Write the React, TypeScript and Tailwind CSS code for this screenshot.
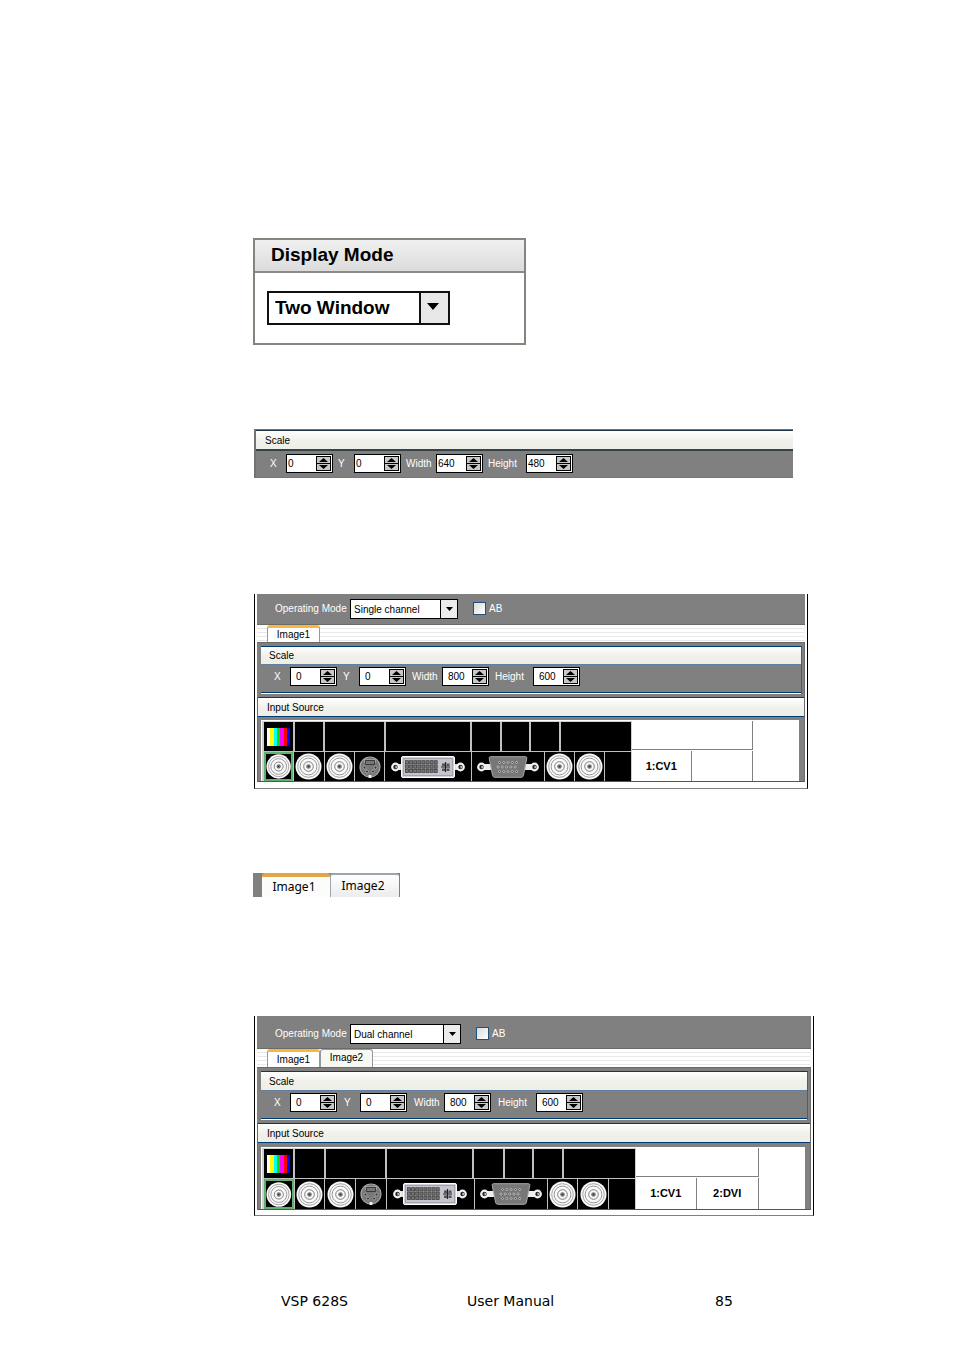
import { useId, useState } from "react";
import clsx from "clsx";

function Spinner({
  label,
  labelClass,
  initial,
  flush,
}: {
  label: string;
  labelClass: string;
  initial: number;
  flush?: boolean;
}) {
  const id = useId();
  const [value, setValue] = useState(initial);

  return (
    <div className="flex items-center">
      <label htmlFor={id} className={clsx("shrink-0 text-white", labelClass)}>
        {label}
      </label>
      <div className="flex h-[19px] w-[47px] items-center border border-black bg-white pr-px">
        <input
          id={id}
          value={value}
          onChange={(e) => setValue(Number(e.target.value) || 0)}
          className={clsx("w-0 min-w-0 flex-1 bg-transparent text-black outline-none", flush ? "pl-px" : "pl-[5px]")}
        />
        <div className="flex h-[15px] w-[15px] shrink-0 flex-col border border-black bg-[#c8c8c8]">
          <button
            onClick={() => setValue(value + 1)}
            aria-label={`Increase ${label}`}
            className="flex flex-1 items-center justify-center border-b border-black"
          >
            <svg width="9" height="4" viewBox="0 0 9 4">
              <path d="M4.5 0 9 4H0z" fill="#000" />
            </svg>
          </button>
          <button
            onClick={() => setValue(Math.max(0, value - 1))}
            aria-label={`Decrease ${label}`}
            className="flex flex-1 items-center justify-center"
          >
            <svg width="9" height="4" viewBox="0 0 9 4">
              <path d="M0 0H9L4.5 4z" fill="#000" />
            </svg>
          </button>
        </div>
      </div>
    </div>
  );
}

function ScaleFields({
  width,
  height,
  flush,
  className,
}: {
  width: number;
  height: number;
  flush?: boolean;
  className?: string;
}) {
  return (
    <div className={clsx("flex items-center", className)}>
      <Spinner label="X" labelClass="w-4" initial={0} flush={flush} />
      <Spinner label="Y" labelClass="w-4" initial={0} flush={flush} />
      <Spinner label="Width" labelClass="w-[30px]" initial={width} flush={flush} />
      <Spinner label="Height" labelClass="w-[38px]" initial={height} flush={flush} />
    </div>
  );
}

function BncIcon() {
  return (
    <svg width="27" height="27" viewBox="0 0 27 27" fill="none">
      <circle cx="13.5" cy="13.5" r="13" fill="#fafafa" />
      <circle cx="13.5" cy="13.5" r="10.8" stroke="#999" strokeWidth="0.9" />
      <circle cx="13.5" cy="13.5" r="8.4" stroke="#8a8a8a" strokeWidth="0.9" />
      <circle cx="13.5" cy="13.5" r="4.8" stroke="#7a7a7a" />
      <circle cx="13.5" cy="13.5" r="2.3" fill="#777" />
      <circle cx="13.5" cy="13.5" r="0.8" fill="#333" />
    </svg>
  );
}

function SVideoIcon() {
  return (
    <svg width="22" height="22" viewBox="0 0 22 22" fill="none">
      <circle cx="11" cy="11" r="10" fill="#777" stroke="#a8a8a8" strokeWidth="1.2" />
      <path d="M6.5 8.500V4.500h9V8.500z" fill="#777" stroke="#3a3a3a" />
      <path d="M5.500 7V3.500h11V7" stroke="#aaa" strokeWidth="0.8" />
      <g fill="#333" stroke="#b5b5b5" strokeWidth="0.8">
        <circle cx="5.5" cy="11.5" r="1.5" />
        <circle cx="16.500" cy="11.5" r="1.5" />
        <circle cx="8" cy="15.5" r="1.5" />
        <circle cx="14" cy="15.5" r="1.5" />
      </g>
      <path d="M9.5 19h3v3h-3z" fill="#eee" />
    </svg>
  );
}

function Screw({ x }: { x: number }) {
  return (
    <>
      <circle cx={x} cy="11" r="4.4" fill="#f2f2f2" />
      <circle cx={x} cy="11" r="2.2" fill="#222" />
      <path d={`M${x} 9.5a1.5 1.5 0 0 1 0 3z`} fill="#ddd" />
    </>
  );
}

function DviIcon() {
  const cols = [0, 1, 2, 3, 4, 5, 6, 7];
  return (
    <svg width="74" height="22" viewBox="0 0 74 22">
      <path d="M4 8h6v6H4zM64 8h6v6h-6z" fill="#dcdcdc" />
      <Screw x={4.5} />
      <Screw x={69.5} />
      <rect x="10.5" y="0.5" width="53" height="21" rx="1.5" fill="#d2d2da" stroke="#fff" />
      <rect x="12.5" y="2.5" width="49" height="17" fill="#c4c4cc" stroke="#a2a2aa" />
      {[0, 1, 2].map((row) =>
        cols.map((col) => (
          <rect
            key={`${row}-${col}`}
            x={14.5 + col * 4.1}
            y={4.7 + row * 4.3}
            width="3"
            height="3.2"
            fill="#777"
            stroke="#3f3f3f"
            strokeWidth="0.8"
          />
        ))
      )}
      <path d="M50 11h9M54.5 6v10" stroke="#222" strokeWidth="1.2" />
      <path d="M51 7.500h3v2.500h-3zM55.500 7.500h3v2.500h-3zM51 12.500h3v2.500h-3zM55.500 12.500h3v2.500h-3z" fill="#555" />
    </svg>
  );
}

function VgaIcon() {
  return (
    <svg width="62" height="22" viewBox="0 0 62 22">
      <path d="M4 8h10v6H4zM48 8h10v6H48z" fill="#ededed" />
      <Screw x={4.5} />
      <Screw x={57.5} />
      <path
        d="M13.5.7h35q1.6 0 1.3 1.6l-3.4 17.2q-.4 1.8-2.2 1.8H17.8q-1.8 0-2.2-1.8L12.2 2.3Q11.9.7 13.5.7z"
        fill="#777"
        stroke="#a9a9a9"
      />
      {[0, 1, 2].map((row) =>
        [0, 1, 2, 3, 4].map((col) => (
          <circle
            key={`${row}-${col}`}
            cx={(row === 1 ? 21 : 22.5) + col * 4.3}
            cy={6.5 + row * 4.5}
            r="1"
            fill="#444"
            stroke="#d8d8d8"
            strokeWidth="0.7"
          />
        ))
      )}
    </svg>
  );
}

function ColorBars() {
  const bars = ["#ffffff", "#ffff00", "#00ffff", "#00e000", "#ff00ff", "#ff0000", "#0000ff"];
  return (
    <svg width="23" height="18" viewBox="0 0 23 18" shapeRendering="crispEdges">
      {bars.map((color, i) => (
        <rect key={color} x={i * 3.3} width="3.4" height="18" fill={color} />
      ))}
    </svg>
  );
}

function DropArrow({ big }: { big?: boolean }) {
  return (
    <svg width={big ? 12 : 7} height={big ? 7 : 4} viewBox="0 0 8 4" preserveAspectRatio="none">
      <path d="M0 0H8L4 4z" fill="#000" />
    </svg>
  );
}

function TitleBar({ children, className }: { children: string; className?: string }) {
  return (
    <div className={clsx("flex items-center bg-linear-to-b from-white via-[#f1f1ec] to-[#eeeee6]", className)}>
      {children}
    </div>
  );
}

function SourceCell({
  name,
  selected,
  onSelect,
  children,
}: {
  name: string;
  selected?: boolean;
  onSelect: () => void;
  children?: React.ReactNode;
}) {
  return (
    <button
      onClick={onSelect}
      aria-label={name}
      className={clsx(
        "flex min-w-0 items-center justify-center overflow-hidden bg-black",
        selected && "border-2 border-[#5cb36e]"
      )}
    >
      {children}
    </button>
  );
}

function SourceGrid({ second, dual }: { second?: string; dual?: boolean }) {
  const [source, setSource] = useState("CV1");
  const row2 = [
    { name: "CV1", icon: <BncIcon /> },
    { name: "CV2", icon: <BncIcon /> },
    { name: "CV3", icon: <BncIcon /> },
    { name: "S-Video", icon: <SVideoIcon /> },
    { name: "DVI", icon: <DviIcon /> },
    { name: "VGA", icon: <VgaIcon /> },
    { name: "SDI 1", icon: <BncIcon /> },
    { name: "SDI 2", icon: <BncIcon /> },
    { name: "None" },
  ];

  return (
    <div className="grid grid-cols-[371fr_122fr_46fr] border-t border-l border-white bg-white">
      <div className="border-t border-r border-l-2 border-[#d0d0d0] bg-[#c0c0c0]">
        <div className="grid h-[30px] grid-cols-[30fr_30fr_61fr_88fr_30fr_28fr_29fr_73fr] gap-x-0.5 pb-px">
          <div className="flex items-center justify-center bg-black">
            <ColorBars />
          </div>
          {[1, 2, 3, 4, 5, 6, 7].map((i) => (
            <div key={i} className="bg-black" />
          ))}
        </div>
        <div
          className={clsx(
            "grid grid-cols-[30fr_30fr_30fr_30fr_88fr_73fr_30fr_30fr_26fr] gap-x-px",
            dual ? "h-[30px]" : "h-[29px]"
          )}
        >
          {row2.map((s) => (
            <SourceCell key={s.name} name={s.name} selected={source === s.name} onSelect={() => setSource(s.name)}>
              {s.icon}
            </SourceCell>
          ))}
        </div>
      </div>
      <div className="flex flex-col text-[11px] font-bold">
        <div className="h-[29px] border-r border-b border-[#808080]" />
        <div className="mt-px grid flex-1 grid-cols-2 border-r border-[#808080]">
          <div className="flex items-center justify-center border-r border-[#808080]">1:CV1</div>
          <div className="flex items-center justify-center">{second}</div>
        </div>
      </div>
      <div />
    </div>
  );
}

function Tabs({ names, className }: { names: string[]; className?: string }) {
  const [active, setActive] = useState(names[0]);

  return (
    <div
      role="tablist"
      className={clsx(
        "flex items-end border-r border-[#f4f4f4] bg-[repeating-linear-gradient(to_bottom,#ffffff_0px,#ffffff_3px,#e9e9ec_3px,#e9e9ec_4px)] pl-[10px]",
        className
      )}
    >
      {names.map((name) => (
        <button
          key={name}
          role="tab"
          aria-selected={active === name}
          onClick={() => setActive(name)}
          className={clsx(
            "h-full w-[53px] rounded-t-[3px] border-x border-[#919b9c] leading-3",
            active === name ? "border-t-3 border-t-[#f9b83a] bg-white" : "border-t bg-[#f7f7f4] pb-px"
          )}
        >
          {name}
        </button>
      ))}
    </div>
  );
}

function ControlPanel({
  mode,
  tabs,
  second,
  dual,
}: {
  mode: string;
  tabs: string[];
  second?: string;
  dual?: boolean;
}) {
  const id = useId();
  const bar = dual ? "h-[18px]" : "h-[17px]";

  return (
    <section
      className={clsx(
        "ml-px w-full border-x border-b border-x-black border-b-[#808080] px-0.5 text-[10px]",
        dual ? "max-w-[560px] pb-[5px]" : "max-w-[554px] pb-[6px]"
      )}
    >
      <div
        className={clsx(
          "flex items-start border-b border-[#6a6a6a] bg-[#808080] pl-[18px] text-white",
          dual ? "h-[33px] pt-2" : "h-[31px] pt-[5px]"
        )}
      >
        <label htmlFor={`${id}-mode`} className="w-[75px] leading-5 whitespace-nowrap">
          Operating Mode
        </label>
        <div className={clsx("relative h-5", dual ? "w-[111px]" : "w-[108px]")}>
          <select
            id={`${id}-mode`}
            defaultValue={mode}
            className="block h-full w-full appearance-none border border-black bg-white pl-[3px] text-black"
          >
            <option>Single channel</option>
            <option>Dual channel</option>
          </select>
          <span className="pointer-events-none absolute inset-y-0 right-0 flex w-[18px] items-center justify-center border border-black bg-[#ececec]">
            <DropArrow />
          </span>
        </div>
        <label className="ml-[15px] flex h-[18px] items-center gap-[3px]">
          <input
            type="checkbox"
            className="size-[13px] appearance-none border border-[#1c5180] bg-linear-to-br from-[#dcdcd7] to-white checked:bg-[#21a121]"
          />
          AB
        </label>
      </div>
      <Tabs names={tabs} className={bar} />
      <div className="border-t border-r border-[#6a6a6a] bg-[#808080]">
        <div className="px-1 pt-[3px] pb-[3px] pr-0.5">
          <div className="border-t border-r border-t-[#003c74] border-r-[#5a5a5a]">
            <TitleBar className={clsx("pl-2", bar)}>Scale</TitleBar>
            <div className="flex h-7 items-center border-t border-[#5f7fa3] pb-1">
              <ScaleFields width={800} height={600} className={clsx("pl-[13px]", dual ? "gap-[7px]" : "gap-[6px]")} />
            </div>
            <div className="border-t border-b border-t-[#003c74] border-b-white" />
          </div>
        </div>
        <div className="border-l border-[#6a6a6a]">
          <TitleBar className="h-5 border-y border-[#003c74] pl-[9px]">Input Source</TitleBar>
          <div className={clsx("border-b border-[#555] pr-[5px] pl-[3px]", dual ? "pt-1" : "pt-[3px]")}>
            <SourceGrid second={second} dual={dual} />
          </div>
        </div>
      </div>
    </section>
  );
}

function DisplayMode() {
  return (
    <section className="h-[107px] w-full max-w-[273px] border-2 border-[#85857e] bg-white text-[19px] font-bold">
      <div className="flex h-[33px] items-center border-b-2 border-[#8a8a8a] bg-linear-to-b from-[#f0f0f0] to-[#dcdcdc] pl-4">
        <label htmlFor="display-mode">Display Mode</label>
      </div>
      <div className="relative mt-[18px] ml-3 h-[34px] w-[183px]">
        <select
          id="display-mode"
          className="block h-full w-full appearance-none border-2 border-[#111] bg-white pl-[6px]"
        >
          <option>Two Window</option>
          <option>Single Window</option>
        </select>
        <span className="pointer-events-none absolute inset-y-0 right-0 flex w-[31px] items-center justify-center border-2 border-[#111] bg-[#e8e8e8] pr-[3px] pb-[3px]">
          <DropArrow big />
        </span>
      </div>
    </section>
  );
}

function ScaleStrip() {
  return (
    <section className="mt-[84px] ml-px w-full max-w-[539px] border-t border-l-2 border-[#6f7477] bg-[#808080] text-[10px]">
      <TitleBar className="h-[21px] border-t border-b-2 border-t-[#1d3446] border-b-[#34424c] pl-[9px]">Scale</TitleBar>
      <div className="flex h-[27px] items-center border-b border-[#6b7785] pb-px pl-[14px]">
        <ScaleFields width={640} height={480} flush className="gap-[5px]" />
      </div>
    </section>
  );
}

function TabStrip() {
  const [active, setActive] = useState("Image1");

  return (
    <div
      role="tablist"
      className="mt-[84px] flex h-6 w-full max-w-[147px] bg-[#808080] pr-px pl-[9px] font-['Noto_Sans',sans-serif] text-[12px]"
    >
      {["Image1", "Image2"].map((name) => (
        <button
          key={name}
          role="tab"
          aria-selected={active === name}
          onClick={() => setActive(name)}
          className={clsx(
            "flex flex-1 items-center justify-center rounded-t-[3px] pr-1",
            active === name
              ? "border-t-4 border-[#e2a548] bg-[#fcfcfa]"
              : "border-t-2 border-l border-[#9aa5ad] bg-linear-to-b from-white to-[#ececec] pb-px"
          )}
        >
          {name}
        </button>
      ))}
    </div>
  );
}

export default function App() {
  return (
    <div className="min-h-screen bg-white font-['Liberation_Sans',Arial,sans-serif] text-black">
      <main className="pt-[238px] pl-[253px]">
        <DisplayMode />
        <ScaleStrip />
        <div className="mt-[116px]">
          <ControlPanel mode="Single channel" tabs={["Image1"]} />
        </div>
        <TabStrip />
        <div className="mt-[119px]">
          <ControlPanel mode="Dual channel" tabs={["Image1", "Image2"]} second="2:DVI" dual />
        </div>
      </main>
      <footer className="mt-[75px] grid grid-cols-[186px_248px_auto] pb-10 pl-[281px] font-['DejaVu_Sans',sans-serif] text-[14px] leading-5">
        <span>VSP 628S</span>
        <span>User Manual</span>
        <span>85</span>
      </footer>
    </div>
  );
}
